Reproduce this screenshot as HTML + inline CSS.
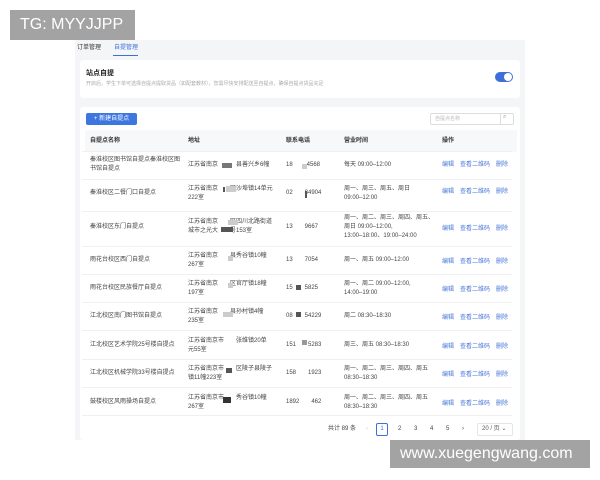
<!DOCTYPE html>
<html><head><meta charset="utf-8"><style>
*{margin:0;padding:0;box-sizing:border-box}
body{width:600px;height:480px;background:#fff;position:relative;overflow:hidden;font-family:"Liberation Sans","Noto Sans CJK SC",sans-serif;color:#333}
.app{position:absolute;left:75px;top:40px;width:450px;height:400px;background:#f4f5f7}
.abs{position:absolute;white-space:nowrap}
.t{font-size:6px;line-height:9px;color:#444}
.lk{font-size:6px;color:#4a78d8}
.r{position:absolute;background:#555}
.g{position:absolute;background:#ccc}
.wm{position:absolute;background:#a3a3a3;color:#fff;font-size:16px;line-height:30px;padding-left:10px}
</style></head><body>
<div class="app">
 <div class="abs t" style="left:2px;top:4px;color:#333">订单管理</div>
 <div class="abs t" style="left:39px;top:4px;color:#3e6fd8">自提管理</div>
 <div class="abs" style="left:38px;top:15px;width:25px;height:1px;background:#3e6fd8"></div>
 <div class="abs" style="left:5px;top:20px;width:440px;height:38px;background:#fff;border-radius:3px"></div>
 <div class="abs" style="left:11px;top:28px;font-size:7px;font-weight:bold;color:#222">站点自提</div>
 <div class="abs" style="left:11px;top:40px;font-size:5px;color:#aaa">开启后，学生下单可选择自提点提取货品（如配套教材），您需尽快安排配送至自提点，确保自提点货品充足</div>
 <div class="abs" style="left:420px;top:32px;width:18px;height:10px;border-radius:5px;background:#3e6fd8"></div>
 <div class="abs" style="left:429px;top:33px;width:8px;height:8px;border-radius:4px;background:#fff"></div>
 <div class="abs" style="left:5px;top:67px;width:440px;height:333px;background:#fff;border-radius:3px"></div>
 <div class="abs" style="left:11px;top:73px;width:51px;height:12px;background:#3e76e0;border-radius:2px;color:#fff;font-size:6px;line-height:12px;text-align:center">+ 新建自提点</div>
 <div class="abs" style="left:355px;top:73px;width:84px;height:12px;border:1px solid #ddd;border-radius:2px;font-size:5px;line-height:10px;color:#bbb;padding-left:4px">自提点名称</div>
 <div class="abs" style="left:425px;top:73px;width:1px;height:12px;background:#ddd"></div>
 <div class="abs" style="left:428px;top:74px;font-size:6px;color:#999">⌕</div>
 <div class="abs" style="left:10px;top:90px;width:432px;height:22px;background:#f7f8fa"></div>
</div>
<div class="abs t" style="left:90px;top:137px;font-weight:bold;color:#333">自提点名称</div>
<div class="abs t" style="left:188px;top:137px;font-weight:bold;color:#333">地址</div>
<div class="abs t" style="left:286px;top:137px;font-weight:bold;color:#333">联系电话</div>
<div class="abs t" style="left:344px;top:137px;font-weight:bold;color:#333">营业时间</div>
<div class="abs t" style="left:442px;top:137px;font-weight:bold;color:#333">操作</div>

<div class="abs t" style="left:90px;top:156px">秦淮校区图书馆自提点秦淮校区图<br>书馆自提点</div>
<div class="abs t" style="left:188px;top:161px">江苏省南京　　　县善兴乡6幢</div>
<div class="abs t" style="left:286px;top:161px">18　　-4568</div>
<div class="abs t" style="left:344px;top:161px">每天 09:00–12:00</div>

<div class="abs t" style="left:90px;top:189px">秦淮校区二餐门口自提点</div>
<div class="abs t" style="left:188px;top:185px">江苏省南京　　区沙埠镇14单元<br>222室</div>
<div class="abs t" style="left:286px;top:189px">02　　84904</div>
<div class="abs t" style="left:344px;top:185px">周一、周三、周五、周日<br>09:00–12:00</div>

<div class="abs t" style="left:90px;top:223px">秦淮校区东门自提点</div>
<div class="abs t" style="left:188px;top:218px">江苏省南京　　区四川北路街道<br>城市之光大　　号153室</div>
<div class="abs t" style="left:286px;top:223px">13　　9667</div>
<div class="abs t" style="left:344px;top:214px">周一、周二、周三、周四、周五、<br>周日 09:00–12:00,<br>13:00–18:00、19:00–24:00</div>

<div class="abs t" style="left:90px;top:256px">雨花台校区西门自提点</div>
<div class="abs t" style="left:188px;top:252px">江苏省南京　　县秀谷镇10幢<br>267室</div>
<div class="abs t" style="left:286px;top:256px">13　　7054</div>
<div class="abs t" style="left:344px;top:256px">周一、周五 09:00–12:00</div>

<div class="abs t" style="left:90px;top:284px">雨花台校区民族餐厅自提点</div>
<div class="abs t" style="left:188px;top:280px">江苏省南京　　区官厅镇18幢<br>197室</div>
<div class="abs t" style="left:286px;top:284px">15　　5825</div>
<div class="abs t" style="left:344px;top:280px">周一、周二 09:00–12:00,<br>14:00–19:00</div>

<div class="abs t" style="left:90px;top:312px">江北校区南门图书馆自提点</div>
<div class="abs t" style="left:188px;top:308px">江苏省南京　　县孙村镇4幢<br>235室</div>
<div class="abs t" style="left:286px;top:312px">08　　54229</div>
<div class="abs t" style="left:344px;top:312px">周二 08:30–18:30</div>

<div class="abs t" style="left:90px;top:341px">江北校区艺术学院25号楼自提点</div>
<div class="abs t" style="left:188px;top:337px">江苏省南京市　　张维镇20单<br>元55室</div>
<div class="abs t" style="left:286px;top:341px">151　　5283</div>
<div class="abs t" style="left:344px;top:341px">周三、周五 08:30–18:30</div>

<div class="abs t" style="left:90px;top:369px">江北校区机械学院33号楼自提点</div>
<div class="abs t" style="left:188px;top:365px">江苏省南京市　　区陵子县陵子<br>镇11幢223室</div>
<div class="abs t" style="left:286px;top:369px">158　　1923</div>
<div class="abs t" style="left:344px;top:365px">周一、周二、周三、周四、周五<br>08:30–18:30</div>

<div class="abs t" style="left:90px;top:398px">鼓楼校区风雨操场自提点</div>
<div class="abs t" style="left:188px;top:394px">江苏省南京市　　秀谷镇10幢<br>267室</div>
<div class="abs t" style="left:286px;top:398px">1892　　462</div>
<div class="abs t" style="left:344px;top:394px">周一、周二、周三、周四、周五<br>08:30–18:30</div>

<!-- redaction blobs -->
<div class="r" style="left:222px;top:163px;width:10px;height:5px;background:#777"></div>
<div class="g" style="left:302px;top:164px;width:5px;height:5px"></div>
<div class="g" style="left:226px;top:186px;width:10px;height:6px"></div>
<div class="r" style="left:223px;top:187px;width:2px;height:5px"></div>
<div class="r" style="left:305px;top:191px;width:2px;height:7px"></div>
<div class="g" style="left:228px;top:220px;width:10px;height:5px"></div>
<div class="r" style="left:221px;top:227px;width:12px;height:5px"></div>
<div class="g" style="left:228px;top:256px;width:5px;height:5px"></div>
<div class="r" style="left:296px;top:285px;width:5px;height:5px"></div>
<div class="g" style="left:228px;top:283px;width:5px;height:5px"></div>
<div class="g" style="left:223px;top:312px;width:10px;height:5px"></div>
<div class="r" style="left:296px;top:312px;width:5px;height:5px"></div>
<div class="g" style="left:302px;top:340px;width:5px;height:5px;background:#999"></div>
<div class="r" style="left:226px;top:368px;width:6px;height:5px"></div>
<div class="r" style="left:223px;top:397px;width:8px;height:6px;background:#333"></div>

<div class="abs" style="left:82px;top:151px;width:430px;height:1px;background:#f0f0f0;box-shadow:0 28px 0 #f0f0f0,0 60px 0 #f0f0f0,0 95px 0 #f0f0f0,0 123px 0 #f0f0f0,0 151px 0 #f0f0f0,0 179px 0 #f0f0f0,0 208px 0 #f0f0f0,0 236px 0 #f0f0f0,0 264px 0 #f0f0f0"></div>

<div class="abs lk" style="left:442px;top:161px;line-height:9px">编辑　查看二维码　删除<br><br><br>编辑　查看二维码　删除</div>
<div class="abs lk" style="left:442px;top:223px">编辑　查看二维码　删除</div>
<div class="abs lk" style="left:442px;top:256px">编辑　查看二维码　删除</div>
<div class="abs lk" style="left:442px;top:284px">编辑　查看二维码　删除</div>
<div class="abs lk" style="left:442px;top:312px">编辑　查看二维码　删除</div>
<div class="abs lk" style="left:442px;top:341px">编辑　查看二维码　删除</div>
<div class="abs lk" style="left:442px;top:369px">编辑　查看二维码　删除</div>
<div class="abs lk" style="left:442px;top:398px">编辑　查看二维码　删除</div>

<div class="abs t" style="left:328px;top:425px">共计 89 条</div>
<div class="abs t" style="left:366px;top:425px;color:#ccc">‹</div>
<div class="abs" style="left:376px;top:423px;width:12px;height:13px;border:1px solid #3e6fd8;border-radius:2px;font-size:6px;line-height:11px;text-align:center;color:#3e6fd8">1</div>
<div class="abs t" style="left:398px;top:425px;word-spacing:11px">2 3 4 5 ›</div>
<div class="abs" style="left:477px;top:423px;width:36px;height:13px;border:1px solid #e5e5e5;border-radius:2px;font-size:6px;line-height:11px;padding-left:4px;color:#555">20 / 页 ⌄</div>

<div class="wm" style="left:10px;top:10px;width:125px;height:30px">TG: MYYJJPP</div>
<div class="wm" style="left:390px;top:440px;width:200px;height:28px;line-height:28px;font-size:16px">www.xuegengwang.com</div>
</body></html>
